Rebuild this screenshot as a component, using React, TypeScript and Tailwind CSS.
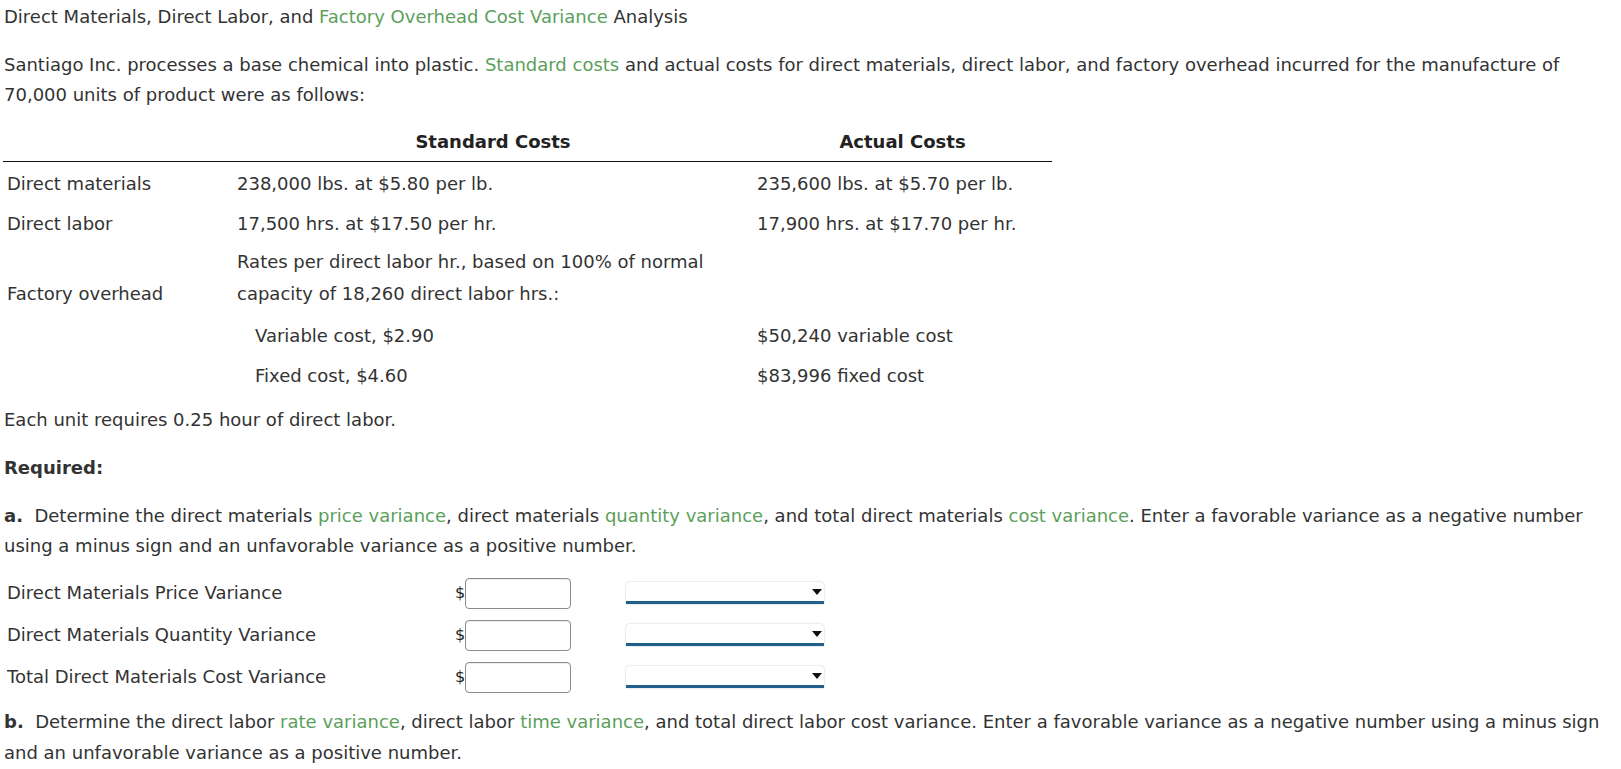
import React from "react";

const G = ({ children }: { children: React.ReactNode }) => (
  <span className="text-[#5b9f5b]">{children}</span>
);

const Row = ({
  a,
  b,
  c,
  bIndent,
}: {
  a?: React.ReactNode;
  b?: React.ReactNode;
  c?: React.ReactNode;
  bIndent?: boolean;
}) => (
  <div className="flex h-[40px] items-start pt-[7px]">
    <div className="w-[230px] pl-[4px]">{a}</div>
    <div className={`w-[520px] ${bIndent ? "pl-[22px]" : "pl-[4px]"}`}>{b}</div>
    <div className="w-[299px] pl-[4px]">{c}</div>
  </div>
);

const InputRow = ({ label }: { label: string }) => (
  <div className="flex h-[42px] items-center">
    <div className="w-[455px] pl-[7px]">{label}</div>
    <div className="flex items-center">
      <span className="text-[16px] text-[#222]">$</span>
      <div className="h-[31px] w-[106px] rounded-[4px] border border-[#8c8c8c] bg-white shadow-[inset_0_1px_1px_rgba(0,0,0,0.08)]" />
    </div>
    <div className="ml-[55px] flex h-[22px] w-[198px] items-center justify-end rounded-t-[4px] border-b-[3px] border-[#215f8b] bg-white pr-[2px] shadow-[0_0_2px_rgba(0,0,0,0.25)]">
      <svg width="10" height="6" viewBox="0 0 10 6">
        <path d="M0 0 L10 0 L5 6 Z" fill="#111" />
      </svg>
    </div>
  </div>
);

export default function App() {
  return (
    <div
      className="min-h-screen bg-white text-[18px] leading-[30px] text-[#333]"
      style={{ fontFamily: '"DejaVu Sans", Verdana, sans-serif' }}
    >
      <div className="pl-[4px] pt-[2px]">
        Direct Materials, Direct Labor, and <G>Factory Overhead Cost Variance</G> Analysis
      </div>
      <div className="mt-[18px] whitespace-nowrap pl-[4px]">
        Santiago Inc. processes a base chemical into plastic. <G>Standard costs</G> and actual costs
        for direct materials, direct labor, and factory overhead incurred for the manufacture of
        <br />
        70,000 units of product were as follows:
      </div>

      <div className="ml-[3px] mt-[3px] w-[1049px]">
        <div className="flex h-[49px] items-end border-b border-[#111] pb-[4px] font-bold text-[#222]">
          <div className="w-[230px]" />
          <div className="w-[520px] text-center">Standard Costs</div>
          <div className="w-[299px] text-center">Actual Costs</div>
        </div>
        <Row a="Direct materials" b="238,000 lbs. at $5.80 per lb." c="235,600 lbs. at $5.70 per lb." />
        <Row a="Direct labor" b="17,500 hrs. at $17.50 per hr." c="17,900 hrs. at $17.70 per hr." />
        <div className="flex h-[72px] items-end pb-[4px] leading-[32px]">
          <div className="w-[230px] pl-[4px]">Factory overhead</div>
          <div className="w-[520px] pl-[4px]">
            Rates per direct labor hr., based on 100% of normal
            <br />
            capacity of 18,260 direct labor hrs.:
          </div>
          <div className="w-[299px]" />
        </div>
        <Row b="Variable cost, $2.90" c="$50,240 variable cost" bIndent />
        <Row b="Fixed cost, $4.60" c="$83,996 fixed cost" bIndent />
      </div>

      <div className="mt-[11px] pl-[4px]">Each unit requires 0.25 hour of direct labor.</div>
      <div className="mt-[18px] pl-[4px] font-bold">Required:</div>
      <div className="mt-[18px] whitespace-nowrap pl-[4px]">
        <b>a.</b>&nbsp; Determine the direct materials <G>price variance</G>, direct materials{" "}
        <G>quantity variance</G>, and total direct materials <G>cost variance</G>. Enter a favorable
        variance as a negative number
        <br />
        using a minus sign and an unfavorable variance as a positive number.
      </div>

      <div className="mt-[11px]">
        <InputRow label="Direct Materials Price Variance" />
        <InputRow label="Direct Materials Quantity Variance" />
        <InputRow label="Total Direct Materials Cost Variance" />
      </div>

      <div className="mt-[8px] whitespace-nowrap pl-[4px] leading-[31px]">
        <b>b.</b>&nbsp; Determine the direct labor <G>rate variance</G>, direct labor{" "}
        <G>time variance</G>, and total direct labor cost variance. Enter a favorable variance as a
        negative number using a minus sign
        <br />
        and an unfavorable variance as a positive number.
      </div>
    </div>
  );
}
